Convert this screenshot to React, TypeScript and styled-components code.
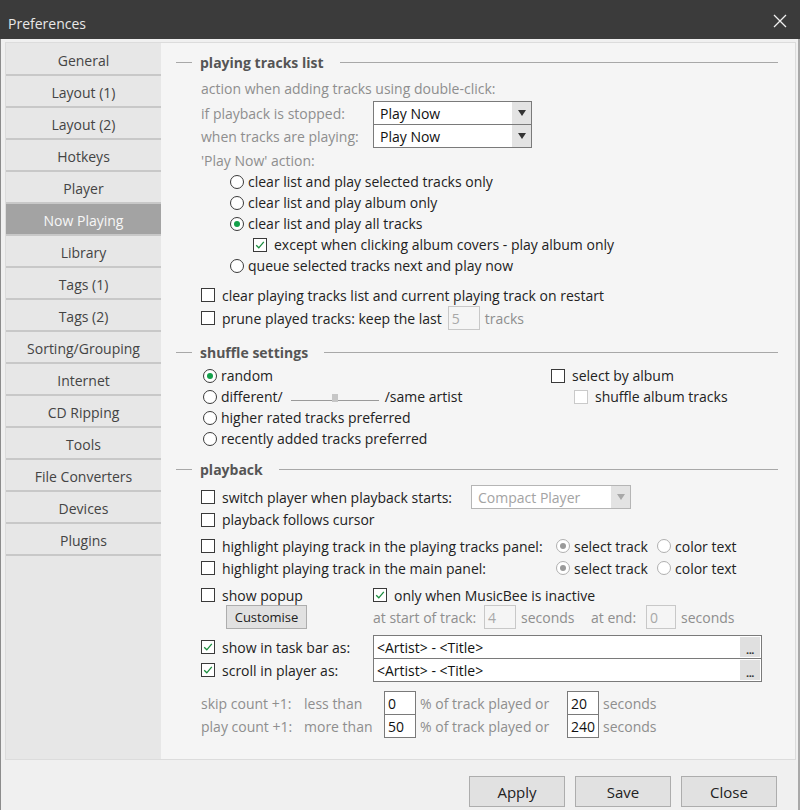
import styled, { createGlobalStyle } from 'styled-components'

const GlobalStyle = createGlobalStyle`
  html, body {
    margin: 0;
    padding: 0;
    background: #f0f0f0;
  }
  body {
    font-family: "Open Sans", "Noto Sans", "Liberation Sans", sans-serif;
    font-size: 14px;
    color: #222;
  }
  * {
    box-sizing: border-box;
  }
`

const Window = styled.div`
  width: 800px;
  height: 810px;
  display: flex;
  flex-direction: column;
  overflow: hidden;
`

const TitleBar = styled.div`
  height: 39px;
  flex: none;
  background: #3b3b3b;
  color: #e8e8e8;
  font-size: 14px;
  display: flex;
  align-items: center;
  justify-content: space-between;
  padding: 2px 12px 0 8px;
`

const Title = styled.span`
  padding-top: 6px;
`

const CloseIcon = () => (
  <svg width="16" height="16" viewBox="0 0 16 16">
    <path d="M2 2 L14 14 M14 2 L2 14" stroke="#f0f0f0" strokeWidth="1.3" fill="none" />
  </svg>
)

const Body = styled.div`
  flex: 1;
  display: flex;
  flex-direction: column;
  background: #f0f0f0;
  border-left: 1px solid #8c8c8c;
  border-right: 2px solid #a9a9a9;
  padding: 3px 2px 0 4px;
`

const Panel = styled.div`
  flex: 1;
  display: flex;
  border: 1px solid #dcdcdc;
  min-height: 0;
`

const Sidebar = styled.nav`
  width: 155px;
  flex: none;
  background: #e7e7e7;
  padding-top: 1px;
`

const NavItem = styled.div<{ $active?: boolean }>`
  height: 32px;
  display: flex;
  align-items: center;
  justify-content: center;
  padding-top: 3px;
  border-bottom: 2px solid #c8c8c8;
  background: ${(p) => (p.$active ? '#a3a3a3' : '#e7e7e7')};
  color: ${(p) => (p.$active ? '#f7f7f7' : '#444')};
  font-size: 14px;
`

const Content = styled.div`
  flex: 1;
  background: #f5f5f5;
  padding: 9px 17px 0 15px;
`

const SectionHeader = styled.div<{ $mt?: number }>`
  height: 20px;
  margin-top: ${(p) => p.$mt ?? 0}px;
  display: flex;
  align-items: center;
  gap: 8px;
  font-weight: 700;
  color: #555;

  &::before {
    content: '';
    width: 16px;
    height: 1px;
    background: #a8a8a8;
  }
  &::after {
    content: '';
    flex: 1;
    height: 1px;
    background: #a8a8a8;
    margin-left: 8px;
  }
`

const SectionBody = styled.div`
  margin-left: 25px;
`

const Row = styled.div<{ $h?: number; $mt?: number; $indent?: number }>`
  height: ${(p) => p.$h ?? 21}px;
  margin-top: ${(p) => p.$mt ?? 0}px;
  padding-left: ${(p) => p.$indent ?? 0}px;
  display: flex;
  align-items: center;
  white-space: nowrap;
`

const Text = styled.span<{ $muted?: boolean; $w?: number; $ml?: number }>`
  color: ${(p) => (p.$muted ? '#8e8e8e' : '#222')};
  width: ${(p) => (p.$w ? `${p.$w}px` : 'auto')};
  margin-left: ${(p) => p.$ml ?? 0}px;
  flex: none;
`

const Box = styled.span<{ $disabled?: boolean }>`
  width: 14px;
  height: 14px;
  flex: none;
  border: 1px solid ${(p) => (p.$disabled ? '#cacaca' : '#3a3a3a')};
  background: #fff;
  display: inline-flex;
  align-items: center;
  justify-content: center;
`

const ItemLabel = styled.label<{ $w?: number; $gap?: number }>`
  display: flex;
  align-items: center;
  gap: ${(p) => p.$gap ?? 7}px;
  width: ${(p) => (p.$w ? `${p.$w}px` : 'auto')};
  flex: none;
`

const Check = ({
  label,
  checked,
  disabled,
  w,
}: {
  label: string
  checked?: boolean
  disabled?: boolean
  w?: number
}) => (
  <ItemLabel $w={w}>
    <Box $disabled={disabled}>
      {checked && (
        <svg width="12" height="12" viewBox="0 0 12 12">
          <path d="M2.2 6.2 L4.8 8.8 L9.8 2.8" stroke="#1a8d3d" strokeWidth="1.3" fill="none" />
        </svg>
      )}
    </Box>
    <span>{label}</span>
  </ItemLabel>
)

const RadioCircle = styled.span<{ $checked?: boolean; $disabled?: boolean }>`
  width: 14px;
  height: 14px;
  flex: none;
  border-radius: 50%;
  border: 1px solid ${(p) => (p.$disabled ? '#b0b0b0' : '#3a3a3a')};
  background: #fff;
  display: inline-flex;
  align-items: center;
  justify-content: center;

  &::after {
    content: '';
    display: ${(p) => (p.$checked ? 'block' : 'none')};
    width: 6px;
    height: 6px;
    border-radius: 50%;
    background: ${(p) => (p.$disabled ? '#9a9a9a' : '#13a04a')};
  }
`

const Radio = ({
  label,
  checked,
  disabled,
  w,
}: {
  label: string
  checked?: boolean
  disabled?: boolean
  w?: number
}) => (
  <ItemLabel $w={w} $gap={4}>
    <RadioCircle $checked={checked} $disabled={disabled} />
    <span>{label}</span>
  </ItemLabel>
)

const SelectBox = styled.div<{ $w: number; $disabled?: boolean }>`
  width: ${(p) => p.$w}px;
  height: 24px;
  flex: none;
  display: flex;
  border: 1px solid ${(p) => (p.$disabled ? '#b5b5b5' : '#7a7a7a')};
  background: #fff;
  color: ${(p) => (p.$disabled ? '#a3a3a3' : '#111')};
`

const SelectValue = styled.span`
  flex: 1;
  display: flex;
  align-items: center;
  padding-left: 6px;
`

const SelectArrow = styled.span<{ $disabled?: boolean }>`
  width: 19px;
  background: #e3e3e3;
  display: flex;
  align-items: center;
  justify-content: center;

  &::after {
    content: '';
    border-left: 4px solid transparent;
    border-right: 4px solid transparent;
    border-top: 6px solid ${(p) => (p.$disabled ? '#a8a8a8' : '#333')};
  }
`

const Select = ({ value, w, disabled }: { value: string; w: number; disabled?: boolean }) => (
  <SelectBox $w={w} $disabled={disabled}>
    <SelectValue>{value}</SelectValue>
    <SelectArrow $disabled={disabled} />
  </SelectBox>
)

const Field = styled.span<{ $w?: number; $disabled?: boolean; $ml?: number }>`
  width: ${(p) => p.$w ?? 32}px;
  height: 24px;
  flex: none;
  margin-left: ${(p) => p.$ml ?? 0}px;
  display: flex;
  align-items: center;
  padding-left: 3px;
  border: 1px solid ${(p) => (p.$disabled ? '#c8c8c8' : '#7a7a7a')};
  background: ${(p) => (p.$disabled ? '#f5f5f5' : '#fff')};
  color: ${(p) => (p.$disabled ? '#a8a8a8' : '#111')};
`

const PatternField = styled.div`
  width: 389px;
  height: 24px;
  flex: none;
  display: flex;
  border: 1px solid #7a7a7a;
  background: #fff;
  color: #111;
`

const PatternValue = styled.span`
  flex: 1;
  display: flex;
  align-items: center;
  padding-left: 3px;
`

const EllipsisButton = styled.span`
  width: 20px;
  margin: 1px;
  background: #e0e0e0;
  display: flex;
  align-items: flex-end;
  justify-content: center;
  font-size: 11px;
  font-weight: 700;
  line-height: 14px;
  color: #333;
  letter-spacing: -0.5px;
`

const Pattern = ({ value }: { value: string }) => (
  <PatternField>
    <PatternValue>{value}</PatternValue>
    <EllipsisButton>...</EllipsisButton>
  </PatternField>
)

const SmallButton = styled.button`
  width: 81px;
  height: 24px;
  margin-left: 25px;
  border: 1px solid #adadad;
  background: #e1e1e1;
  font-family: inherit;
  font-size: 13px;
  color: #222;
  padding: 0;
`

const Slider = styled.span`
  width: 88px;
  height: 10px;
  margin: 0 6px 0 8px;
  display: flex;
  align-items: flex-end;
  flex: none;
`

const SliderLine = styled.span<{ $w?: number }>`
  flex: ${(p) => (p.$w ? 'none' : 1)};
  width: ${(p) => (p.$w ? `${p.$w}px` : 'auto')};
  height: 1px;
  background: #9a9a9a;
  margin-bottom: 1px;
`

const SliderThumb = styled.span`
  width: 6px;
  height: 8px;
  background: #c6c6c6;
`

const ShuffleGrid = styled.div`
  display: grid;
  grid-template-columns: 350px 1fr;
  margin-top: 3px;
`

const Column = styled.div<{ $indent?: number }>`
  padding-left: ${(p) => p.$indent ?? 0}px;
`

const SplitRow = styled.div<{ $h?: number; $mt?: number }>`
  height: ${(p) => p.$h ?? 22}px;
  margin-top: ${(p) => p.$mt ?? 0}px;
  display: grid;
  grid-template-columns: 172px 1fr;
  align-items: center;
  white-space: nowrap;
`

const Cell = styled.div`
  display: flex;
  align-items: center;
`

const Footer = styled.div`
  height: 50px;
  flex: none;
  display: flex;
  justify-content: flex-end;
  align-items: flex-start;
  gap: 10px;
  padding: 16px 19px 0 0;
`

const DialogButton = styled.button`
  width: 96px;
  height: 31px;
  border: 1px solid #adadad;
  background: #e1e1e1;
  font-family: inherit;
  font-size: 15px;
  color: #222;
  padding: 0;
`

const navItems = [
  'General',
  'Layout (1)',
  'Layout (2)',
  'Hotkeys',
  'Player',
  'Now Playing',
  'Library',
  'Tags (1)',
  'Tags (2)',
  'Sorting/Grouping',
  'Internet',
  'CD Ripping',
  'Tools',
  'File Converters',
  'Devices',
  'Plugins',
]

export default function App() {
  return (
    <>
      <GlobalStyle />
      <Window>
        <TitleBar>
          <Title>Preferences</Title>
          <CloseIcon />
        </TitleBar>
        <Body>
          <Panel>
            <Sidebar>
              {navItems.map((item) => (
                <NavItem key={item} $active={item === 'Now Playing'}>
                  {item}
                </NavItem>
              ))}
            </Sidebar>
            <Content>
              <SectionHeader>playing tracks list</SectionHeader>
              <SectionBody>
                <Row $h={22} $mt={5}>
                  <Text $muted>action when adding tracks using double-click:</Text>
                </Row>
                <Row $h={24} $mt={2}>
                  <Text $muted $w={172}>if playback is stopped:</Text>
                  <Select value="Play Now" w={159} />
                </Row>
                <Row $h={24} $mt={-1}>
                  <Text $muted $w={172}>when tracks are playing:</Text>
                  <Select value="Play Now" w={159} />
                </Row>
                <Row $mt={2}>
                  <Text $muted>'Play Now' action:</Text>
                </Row>
                <Row $indent={29}>
                  <Radio label="clear list and play selected tracks only" />
                </Row>
                <Row $indent={29}>
                  <Radio label="clear list and play album only" />
                </Row>
                <Row $indent={29}>
                  <Radio label="clear list and play all tracks" checked />
                </Row>
                <Row $indent={52}>
                  <Check label="except when clicking album covers - play album only" checked />
                </Row>
                <Row $indent={29}>
                  <Radio label="queue selected tracks next and play now" />
                </Row>
                <Row $h={22} $mt={8}>
                  <Check label="clear playing tracks list and current playing track on restart" />
                </Row>
                <Row $h={24}>
                  <Check label="prune played tracks: keep the last" />
                  <Field $ml={6} $disabled>5</Field>
                  <Text $muted $ml={5}>tracks</Text>
                </Row>
              </SectionBody>

              <SectionHeader $mt={12}>shuffle settings</SectionHeader>
              <SectionBody>
                <ShuffleGrid>
                  <Column $indent={2}>
                    <Row>
                      <Radio label="random" checked />
                    </Row>
                    <Row>
                      <Radio label="different/" />
                      <Slider>
                        <SliderLine $w={41} />
                        <SliderThumb />
                        <SliderLine />
                      </Slider>
                      <Text>/same artist</Text>
                    </Row>
                    <Row>
                      <Radio label="higher rated tracks preferred" />
                    </Row>
                    <Row>
                      <Radio label="recently added tracks preferred" />
                    </Row>
                  </Column>
                  <Column>
                    <Row>
                      <Check label="select by album" />
                    </Row>
                    <Row $indent={23}>
                      <Check label="shuffle album tracks" disabled />
                    </Row>
                  </Column>
                </ShuffleGrid>
              </SectionBody>

              <SectionHeader $mt={10}>playback</SectionHeader>
              <SectionBody>
                <Row $h={24} $mt={6}>
                  <Check label="switch player when playback starts:" w={270} />
                  <Select value="Compact Player" w={160} disabled />
                </Row>
                <Row>
                  <Check label="playback follows cursor" />
                </Row>
                <Row $h={22} $mt={5}>
                  <Check label="highlight playing track in the playing tracks panel:" w={355} />
                  <Radio label="select track" checked disabled w={101} />
                  <Radio label="color text" disabled />
                </Row>
                <Row $h={22}>
                  <Check label="highlight playing track in the main panel:" w={355} />
                  <Radio label="select track" checked disabled w={101} />
                  <Radio label="color text" disabled />
                </Row>
                <SplitRow $mt={5}>
                  <Cell>
                    <Check label="show popup" />
                  </Cell>
                  <Cell>
                    <Check label="only when MusicBee is inactive" checked />
                  </Cell>
                </SplitRow>
                <SplitRow $h={24} $mt={-1}>
                  <Cell>
                    <SmallButton>Customise</SmallButton>
                  </Cell>
                  <Cell>
                    <Text $muted $w={111}>at start of track:</Text>
                    <Field $disabled>4</Field>
                    <Text $muted $w={70} $ml={5}>seconds</Text>
                    <Text $muted $w={55}>at end:</Text>
                    <Field $w={30} $disabled>0</Field>
                    <Text $muted $ml={5}>seconds</Text>
                  </Cell>
                </SplitRow>
                <Row $h={24} $mt={6}>
                  <Check label="show in task bar as:" checked w={172} />
                  <Pattern value="<Artist> - <Title>" />
                </Row>
                <Row $h={24} $mt={-1}>
                  <Check label="scroll in player as:" checked w={172} />
                  <Pattern value="<Artist> - <Title>" />
                </Row>
                <Row $h={24} $mt={9}>
                  <Text $muted $w={103}>skip count +1:</Text>
                  <Text $muted $w={80}>less than</Text>
                  <Field>0</Field>
                  <Text $muted $w={147} $ml={4}>% of track played or</Text>
                  <Field>20</Field>
                  <Text $muted $ml={4}>seconds</Text>
                </Row>
                <Row $h={24} $mt={-1}>
                  <Text $muted $w={103}>play count +1:</Text>
                  <Text $muted $w={80}>more than</Text>
                  <Field>50</Field>
                  <Text $muted $w={147} $ml={4}>% of track played or</Text>
                  <Field>240</Field>
                  <Text $muted $ml={4}>seconds</Text>
                </Row>
              </SectionBody>
            </Content>
          </Panel>
          <Footer>
            <DialogButton>Apply</DialogButton>
            <DialogButton>Save</DialogButton>
            <DialogButton>Close</DialogButton>
          </Footer>
        </Body>
      </Window>
    </>
  )
}
